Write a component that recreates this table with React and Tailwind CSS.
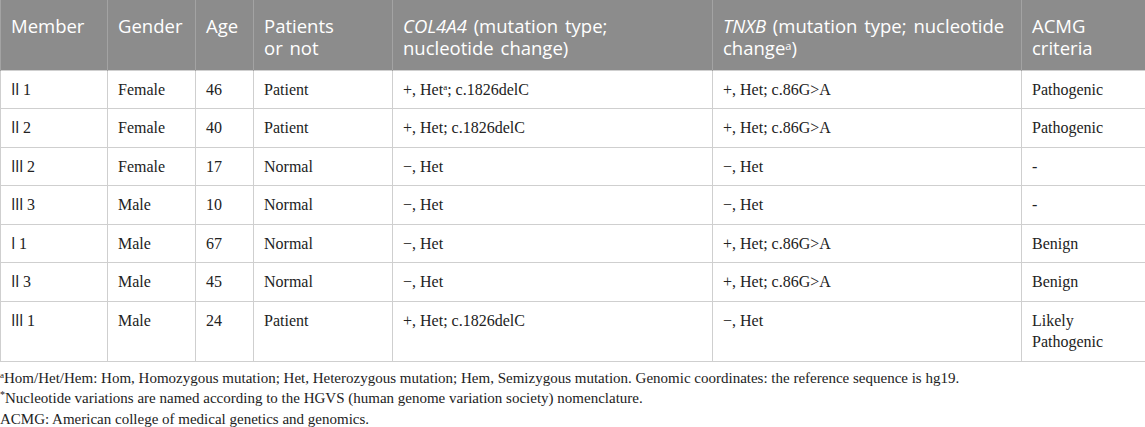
import React from "react";

const rows = [
  ["II", "1", "Female", "46", "Patient", "col1sup", "+, Het; c.86G>A", ["Pathogenic"]],
  ["II", "2", "Female", "40", "Patient", "+, Het; c.1826delC", "+, Het; c.86G>A", ["Pathogenic"]],
  ["III", "2", "Female", "17", "Normal", "\u2212, Het", "\u2212, Het", ["-"]],
  ["III", "3", "Male", "10", "Normal", "\u2212, Het", "\u2212, Het", ["-"]],
  ["I", "1", "Male", "67", "Normal", "\u2212, Het", "+, Het; c.86G>A", ["Benign"]],
  ["II", "3", "Male", "45", "Normal", "\u2212, Het", "+, Het; c.86G>A", ["Benign"]],
  ["III", "1", "Male", "24", "Patient", "+, Het; c.1826delC", "\u2212, Het", ["Likely", "Pathogenic"]],
];

const th =
  "border-x border-[#a3a3a3] px-[10px] pt-[15px] pb-[5px] text-left align-top font-normal text-white text-[18.5px] leading-[22px] [word-spacing:2px] whitespace-nowrap font-['Open_Sans','Noto_Sans',sans-serif]";
const td =
  "border border-[#cfcfcf] px-[10px] pt-[8px] pb-[8px] align-top text-[#222] text-[16px] leading-[21.5px] font-['Liberation_Serif','DejaVu_Serif',serif]";

export default function App() {
  return (
    <div className="w-[1145px] h-[427px] bg-white font-['Liberation_Serif','DejaVu_Serif',serif]">
      <table className="border-collapse table-fixed w-[1145px]">
        <colgroup>
          <col className="w-[107px]" />
          <col className="w-[88px]" />
          <col className="w-[58px]" />
          <col className="w-[139px]" />
          <col className="w-[320px]" />
          <col className="w-[309px]" />
          <col className="w-[124px]" />
        </colgroup>
        <thead>
          <tr className="bg-[#8c8c8c] h-[70px]">
            <th className={th}>Member</th>
            <th className={th}>Gender</th>
            <th className={th}>Age</th>
            <th className={th}>
              Patients
              <br />
              or not
            </th>
            <th className={th}>
              <i>COL4A4</i> (mutation type;
              <br />
              nucleotide change)
            </th>
            <th className={th}>
              <i>TNXB</i> (mutation type; nucleotide
              <br />
              change<sup className="text-[11px]">a</sup>)
            </th>
            <th className={th}>
              ACMG
              <br />
              criteria
            </th>
          </tr>
        </thead>
        <tbody>
          {rows.map((r, i) => (
            <tr key={i}>
              <td className={td}>
                <span className="font-['Open_Sans','Noto_Sans',sans-serif] text-[16px] tracking-[-0.5px]">
                  {r[0]}
                </span>{" "}
                {r[1]}
              </td>
              <td className={td}>{r[2]}</td>
              <td className={td}>{r[3]}</td>
              <td className={td}>{r[4]}</td>
              <td className={td}>
                {r[5] === "col1sup" ? (
                  <>
                    +, Het<sup className="text-[9px]">a</sup>; c.1826delC
                  </>
                ) : (
                  r[5]
                )}
              </td>
              <td className={td}>{r[6]}</td>
              <td className={td}>
                {r[7].map((l, j) => (
                  <div key={j}>{l}</div>
                ))}
              </td>
            </tr>
          ))}
        </tbody>
      </table>
      <div className="pt-[6px] text-[15px] leading-[20.5px] text-[#222] font-['Liberation_Serif','DejaVu_Serif',serif]">
        <div>
          <sup className="text-[9px]">a</sup>Hom/Het/Hem: Hom, Homozygous mutation; Het, Heterozygous
          mutation; Hem, Semizygous mutation. Genomic coordinates: the reference sequence is hg19.
        </div>
        <div>
          <sup className="text-[10px]">*</sup>Nucleotide variations are named according to the HGVS
          (human genome variation society) nomenclature.
        </div>
        <div>ACMG: American college of medical genetics and genomics.</div>
      </div>
    </div>
  );
}
